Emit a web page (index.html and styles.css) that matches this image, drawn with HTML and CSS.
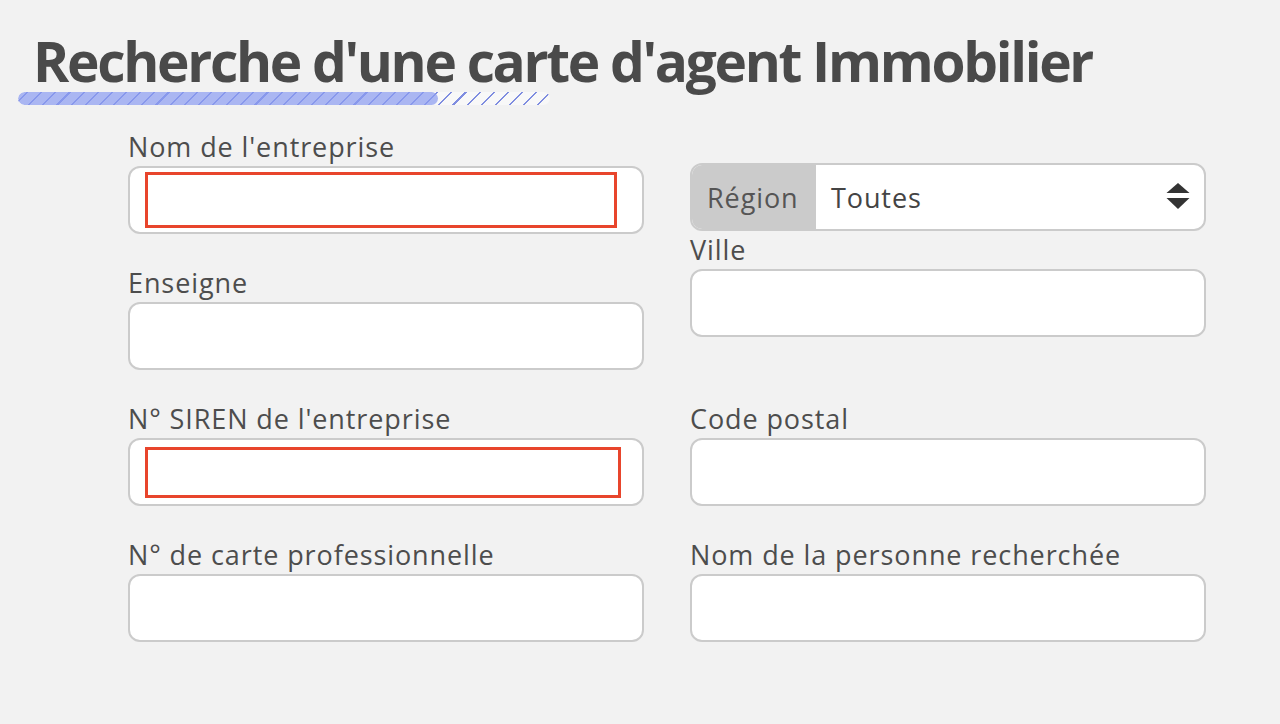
FILE: index.html
```html
<!DOCTYPE html>
<html lang="fr">
<head>
<meta charset="utf-8">
<title>Recherche d'une carte d'agent Immobilier</title>
<link rel="stylesheet" href="styles.css">
</head>
<body>
<div class="page">
  <h1 class="title">Recherche d'une carte d'agent Immobilier</h1>
  <div class="title-bar"><div class="title-bar-fill"></div></div>
  <form class="form">
    <div class="col col-left">
      <div class="field">
        <label class="label">Nom de l'entreprise</label>
        <div class="input"><div class="mark mark-a"></div></div>
      </div>
      <div class="field">
        <label class="label">Enseigne</label>
        <div class="input"></div>
      </div>
      <div class="field">
        <label class="label">N° SIREN de l'entreprise</label>
        <div class="input"><div class="mark mark-b"></div></div>
      </div>
      <div class="field">
        <label class="label">N° de carte professionnelle</label>
        <div class="input"></div>
      </div>
    </div>
    <div class="col col-right">
      <div class="select">
        <div class="select-addon">Région</div>
        <div class="select-value">
          <span>Toutes</span>
          <svg class="select-arrows" width="24" height="28" viewBox="0 0 24 28"><path d="M12 0 L23.5 10 L0.5 10 Z" fill="#333"/><path d="M0.5 15 L23.5 15 L12 26 Z" fill="#333"/></svg>
        </div>
      </div>
      <div class="field field-ville">
        <label class="label">Ville</label>
        <div class="input"></div>
      </div>
      <div class="field field-cp">
        <label class="label">Code postal</label>
        <div class="input"></div>
      </div>
      <div class="field">
        <label class="label">Nom de la personne recherchée</label>
        <div class="input"></div>
      </div>
    </div>
  </form>
</div>
</body>
</html>
```

FILE: styles.css
```css
html, body {
  margin: 0;
  padding: 0;
  background: #f2f2f2;
}
body {
  font-family: "Open Sans", "Noto Sans", sans-serif;
  color: #4a4a4a;
}
.page {
  padding-top: 30px;
}
.title {
  margin: 0;
  padding-left: 33px;
  font-size: 55px;
  line-height: 62px;
  font-weight: 700;
  letter-spacing: -2.3px;
  color: #4a4a4a;
  white-space: nowrap;
}
.title-bar {
  margin: 0 0 0 18px;
  width: 532px;
  height: 13px;
  border-radius: 7px;
  overflow: hidden;
  background-color: #f8f8f8;
  background-image: repeating-linear-gradient(135deg, transparent 0 6px, #7f8de0 6px 7.5px, transparent 7.5px 10px);
}
.title-bar-fill {
  width: 420px;
  height: 100%;
  border-radius: 7px;
  background-color: rgba(140, 156, 240, 0.72);
}
.form {
  display: flex;
  gap: 46px;
  padding-left: 128px;
  margin-top: 28px;
}
.col {
  width: 516px;
  display: flex;
  flex-direction: column;
}
.col-right {
  padding-top: 30px;
}
.field {
  display: flex;
  flex-direction: column;
  margin-bottom: 35px;
}
.label {
  font-size: 27px;
  line-height: 27px;
  padding-bottom: 6px;
  letter-spacing: 0.9px;
  color: #4d4d4d;
}
.input {
  position: relative;
  box-sizing: border-box;
  height: 68px;
  background: #fff;
  border: 2px solid #cbcbcb;
  border-radius: 12px;
}
.mark {
  position: absolute;
  border: 3px solid #e8452c;
  box-sizing: border-box;
}
.mark-a {
  left: 15px;
  top: 4px;
  width: 472px;
  height: 56px;
}
.mark-b {
  left: 15px;
  top: 7px;
  width: 476px;
  height: 51px;
}
.select {
  display: flex;
  box-sizing: border-box;
  height: 68px;
  border: 2px solid #cbcbcb;
  border-radius: 12px;
  overflow: hidden;
  background: #fff;
}
.select-addon {
  width: 124px;
  background: #cbcbcb;
  display: flex;
  align-items: center;
  padding-left: 15px;
  box-sizing: border-box;
  font-size: 27px;
  letter-spacing: 0.9px;
  color: #555;
}
.select-value {
  flex: 1;
  display: flex;
  align-items: center;
  justify-content: space-between;
  padding: 0 14px 0 15px;
  font-size: 27px;
  letter-spacing: 0.9px;
  color: #444;
}
.select-arrows {
  display: block;
}
.field-ville {
  margin-top: 5px;
  margin-bottom: 68px;
}
```
